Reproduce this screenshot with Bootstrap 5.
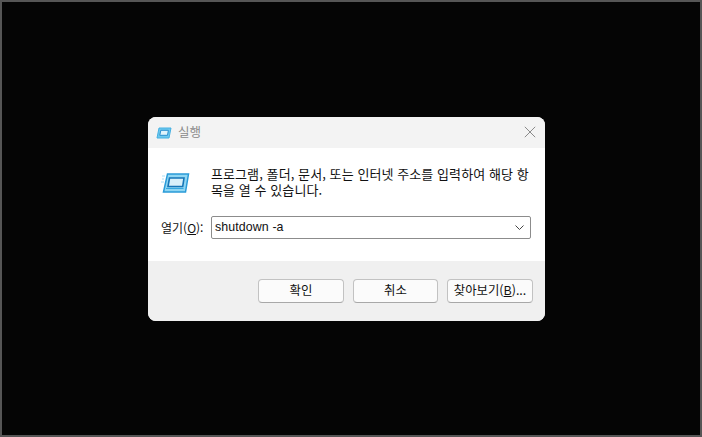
<!DOCTYPE html>
<html lang="ko">
<head>
<meta charset="utf-8">
<title>실행</title>
<link href="https://cdn.jsdelivr.net/npm/bootstrap@5.3.0/dist/css/bootstrap.min.css" rel="stylesheet">
<style>
html,body{height:100%;margin:0}
body{background:#000;font-family:"Noto Sans CJK KR","Liberation Sans",sans-serif;font-size:12px;color:#111;overflow:hidden}
.screen-frame{width:702px;height:437px;border:2px solid #565656;background:#050505;padding:115px 0 0 146px}
.run-dialog{width:397px;height:204px;border-radius:8px;overflow:hidden;background:#fff}
.run-title{height:31px;background:#f3f3f3;padding-left:8px;gap:6px;color:#8a8a8a;font-size:12.5px}
.run-close{margin-left:auto;margin-right:9px;margin-bottom:2px;width:12px;height:12px;display:block}
.run-body{height:113px;padding:0 14px 0 13px}
.run-msg{padding-top:18px;gap:21px;height:68px}
.run-msg p{margin:0;line-height:16px;width:322px;font-size:13px;letter-spacing:.08px}
.run-bigicon{margin-top:7px;flex:none}
.run-open{gap:7px}
.run-open label{white-space:nowrap;font-size:12px;width:43px}
.run-open u{text-underline-offset:1px}
.run-field{width:320px;height:23px;border:1px solid #8c8c8c;border-radius:2px;padding:0 6px 0 3px;font-family:"Liberation Sans",sans-serif;font-size:12.4px;letter-spacing:.1px}
.run-foot{height:60px;background:#f0f0f0;padding:18px 12px 0 110px;gap:9px}
.run-btn{width:86px;height:24px;background:#fbfbfb;border:1px solid #c2c2c2;border-bottom-color:#a8a8a8;border-radius:4px;padding:0 0 2px;font-size:12.4px;color:#111;line-height:1}
.run-btn:hover{background:#fbfbfb;border-color:#c2c2c2;color:#111}
.run-btn.slim{width:85px}
</style>
</head>
<body>
<div class="screen-frame">
  <div class="run-dialog d-flex flex-column">
    <div class="run-title d-flex align-items-center">
      <svg width="16" height="12" viewBox="0 0 16 12" aria-hidden="true">
        <path d="M3 1h12l-2 10H1z" fill="#6cc8ee" stroke="#45b0e2" stroke-width="1"/>
        <path d="M4.800 3.300h7.600l-.9 5H3.800z" fill="#dff3fb" stroke="#2a8fd0" stroke-width="1"/>
      </svg>
      <span>실행</span>
      <svg class="run-close" viewBox="0 0 12 12" aria-hidden="true"><path d="M.8.8l10.400 10.400M11.200.8L.8 11.200" stroke="#8a8a8a" stroke-width="1" fill="none"/></svg>
    </div>
    <div class="run-body">
      <div class="run-msg d-flex">
        <svg class="run-bigicon" width="29" height="20" viewBox="0 0 29 20" aria-hidden="true">
          <path d="M4 3H1M3 6H1M3 9H0" stroke="#a9def5" stroke-width="1"/>
          <path d="M6.500 1h21l-3 18H2.500z" fill="#8fd6f3" stroke="#2a9bd8" stroke-width="1.500"/>
          <path d="M8.500 5h14.500l-1.300 8.500H7z" fill="#d8f0fa" stroke="#1676b8" stroke-width="1.600"/>
          <path d="M5 15.500h17.500" stroke="#35a8df" stroke-width="1"/>
        </svg>
        <p>프로그램, 폴더, 문서, 또는 인터넷 주소를 입력하여 해당 항목을 열 수 있습니다.</p>
      </div>
      <div class="run-open d-flex align-items-center">
        <label>열기(<u>O</u>):</label>
        <div class="run-field d-flex align-items-center justify-content-between bg-white">
          <span>shutdown -a</span>
          <svg width="9" height="5" viewBox="0 0 9 5" aria-hidden="true"><path d="M.5.500l4 4 4-4" stroke="#444" stroke-width="1" fill="none"/></svg>
        </div>
      </div>
    </div>
    <div class="run-foot d-flex">
      <button type="button" class="btn run-btn">확인</button>
      <button type="button" class="btn run-btn slim">취소</button>
      <button type="button" class="btn run-btn">찾아보기(<u>B</u>)...</button>
    </div>
  </div>
</div>
<script src="https://cdn.jsdelivr.net/npm/bootstrap@5.3.0/dist/js/bootstrap.bundle.min.js"></script>
</body>
</html>
